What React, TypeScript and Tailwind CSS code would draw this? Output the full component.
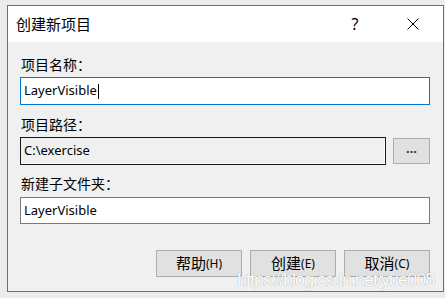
import React from 'react'

const FONT = { fontFamily: '"Noto Sans", "Noto Sans CJK SC", sans-serif' }

function Field({ value, variant }: { value: string; variant: 'focus' | 'readonly' | 'normal' }) {
  const cls =
    variant === 'focus'
      ? 'border-[#0078d7] bg-white h-[28px]'
      : variant === 'readonly'
      ? 'border-[#1a1a1a] bg-[#f0f0f0] h-[28px] shadow-[inset_-1px_-1px_0_#ffffff]'
      : 'border-[#7a7a7a] bg-white h-[27px]'
  return (
    <div className={`flex items-center border px-[3px] text-[13px] text-black ${cls} flex-1`}>
      <span>{value}</span>
      {variant === 'focus' && <span className="ml-[1px] inline-block w-[1px] h-[15px] bg-black" />}
    </div>
  )
}

function Btn({ label, hot }: { label: string; hot: string }) {
  return (
    <button className="w-[86px] h-[27px] border border-[#adadad] bg-[#e1e1e1] text-[15px] text-black flex items-center justify-center leading-none">
      <span>{label}</span>
      <span className="text-[12px] text-black">({hot})</span>
    </button>
  )
}

export default function App() {
  return (
    <div className="relative w-[445px] h-[298px] bg-[#ececec] pl-[7px] pt-[5px] overflow-hidden" style={FONT}>
      <div className="w-[437px] h-[287px] border border-[#6f6f6f] bg-[#f0f0f0] flex flex-col">
        {/* title bar */}
        <div className="h-[36px] bg-white flex items-center pl-[8px] text-[15px] text-black">
          <span className="flex-1">创建新项目</span>
          <span className="w-[12px] text-[16px] mr-[46px] text-center">?</span>
          <svg width="12" height="12" viewBox="0 0 12 12" className="mr-[24px]">
            <path d="M0.5 0.5 L11.5 11.5 M11.5 0.5 L0.5 11.5" stroke="#000" strokeWidth="1" fill="none" />
          </svg>
        </div>

        {/* body */}
        <div className="flex flex-col pl-[12px] pr-[13px] pt-[14px]">
          <div className="h-[18px] leading-[18px] text-[14px] pl-[1px]">项目名称：</div>
          <div className="mt-[3px] flex">
            <Field value="LayerVisible" variant="focus" />
          </div>

          <div className="mt-[11px] h-[18px] leading-[18px] text-[14px] pl-[1px]">项目路径：</div>
          <div className="mt-[3px] flex items-center gap-[7px]">
            <Field value="C:\exercise" variant="readonly" />
            <button className="w-[37px] h-[26px] border border-[#adadad] bg-[#e1e1e1] text-[13px] font-bold leading-none pb-[6px] text-[#333]">
              ...
            </button>
          </div>

          <div className="mt-[10px] h-[18px] leading-[18px] text-[14px] pl-[1px]">新建子文件夹：</div>
          <div className="mt-[4px] flex">
            <Field value="LayerVisible" variant="normal" />
          </div>

          <div className="mt-[26px] flex justify-end gap-[8px]">
            <Btn label="帮助" hot="H" />
            <Btn label="创建" hot="E" />
            <Btn label="取消" hot="C" />
          </div>
        </div>
      </div>

      {/* watermark */}
      <div
        className="absolute left-[237px] top-[269px] text-[18px] leading-[22px] text-white tracking-[-1px]"
        style={{ fontFamily: '"Liberation Sans", sans-serif', textShadow: '0 0 1px rgba(0,0,0,0.45)' }}
      >
        https://blog.csdn.net/yue008
      </div>
    </div>
  )
}
